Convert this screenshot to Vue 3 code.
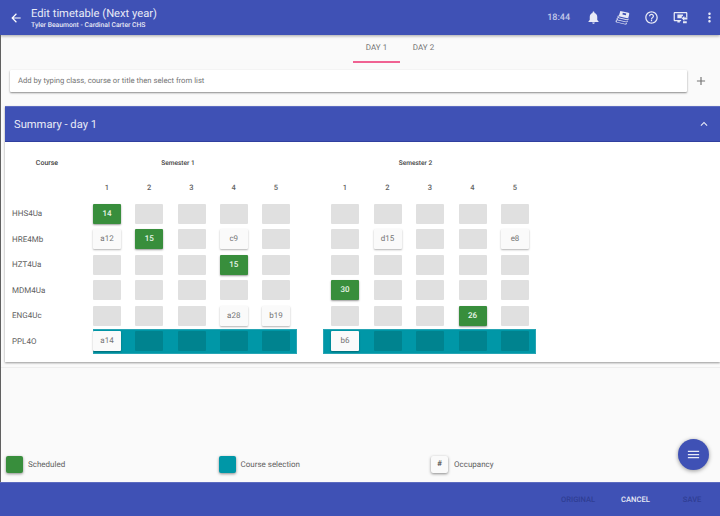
<template>
  <div class="app">
    <header class="topbar">
      <svg class="back" viewBox="0 0 24 24" width="14" height="14"><path d="M20 11H7.830l5.590-5.590L12 4l-8 8 8 8 1.410-1.410L7.830 13H20v-2z" /></svg>
      <div class="titles">
        <div class="title">Edit timetable (Next year)</div>
        <div class="subtitle">Tyler Beaumont - Cardinal Carter CHS</div>
      </div>
      <div class="time">18:44</div>
      <svg class="tool" viewBox="0 0 24 24" width="15" height="15"><path d="M12 22c1.100 0 2-.9 2-2h-4c0 1.100.89 2 2 2zm6-6v-5c0-3.070-1.640-5.640-4.500-6.320V4c0-.83-.67-1.500-1.500-1.500s-1.500.67-1.500 1.500v.68C7.630 5.360 6 7.920 6 11v5l-2 2v1h16v-1l-2-2z" /></svg>
      <svg class="tool" viewBox="0 0 24 24" width="15" height="15">
        <path d="M8.500 1.500l13 3c1 .2 1.500 1 1.300 2l-1.300 5.300c-.2 1-1 1.500-2 1.300l-13.500-3.100z" />
        <path class="cut" d="M12.500 4.500l5.500 1.200-.6 2.800-5.500-1.200z" />
        <path d="M5 8.500c-1.200 1.500-1.200 3.200-.5 4.200l14.800 3.500c1 .2 1.800-.2 2.400-1l.6-1.900-2 1.400c-.6.3-1 .3-1.600.2L6.500 12c-.8-.3-.9-1.300-.7-2.800z" />
        <path d="M3.500 12c-1.200 1.500-1.200 3.200-.5 4.200l14.800 3.500c1 .2 1.800-.2 2.400-1l.6-1.900-2 1.400c-.6.3-1 .3-1.600.2L5 15.500c-.8-.3-.9-1.300-.7-2.800z" />
        <path d="M2 15.500c-1.200 1.500-1.200 3.200-.5 4.200l14.800 3.500c1 .2 1.800-.2 2.400-1l.6-1.900-2 1.400c-.6.3-1 .3-1.600.2L3.500 19c-.8-.3-.9-1.300-.7-2.800z" />
      </svg>
      <svg class="tool" viewBox="0 0 24 24" width="15" height="15"><path d="M11 18h2v-2h-2v2zm1-16C6.480 2 2 6.480 2 12s4.480 10 10 10 10-4.480 10-10S17.520 2 12 2zm0 18c-4.410 0-8-3.590-8-8s3.590-8 8-8 8 3.590 8 8-3.590 8-8 8zm0-14c-2.210 0-4 1.790-4 4h2c0-1.100.9-2 2-2s2 .9 2 2c0 2-3 1.750-3 5h2c0-2.250 3-2.500 3-5 0-2.210-1.790-4-4-4z" /></svg>
      <svg class="tool" viewBox="0 0 24 24" width="15" height="15"><path d="M3 3h18c1.100 0 2 .9 2 2v7h-2V5H3v11h10v2h-2v2H7v-2H3c-1.100 0-2-.9-2-2V5c0-1.100.9-2 2-2z" /><path d="M7 7h9v2l-2 1.500V13H7z" /><path d="M14 13l4-3.500V12h5v3h-5v2.500zM16 18h6v3h-6z" /></svg>
      <svg class="tool last" viewBox="0 0 24 24" width="15" height="15"><path d="M12 8c1.100 0 2-.9 2-2s-.9-2-2-2-2 .9-2 2 .9 2 2 2zm0 2c-1.100 0-2 .9-2 2s.9 2 2 2 2-.9 2-2-.9-2-2-2zm0 6c-1.100 0-2 .9-2 2s.9 2 2 2 2-.9 2-2-.9-2-2-2z" /></svg>
    </header>

    <nav class="tabs">
      <div v-for="tab in tabs" :key="tab" class="tab" :class="{ active: tab === 'DAY 1' }">{{ tab }}</div>
    </nav>

    <div class="search-row">
      <div class="search">Add by typing class, course or title then select from list</div>
      <svg class="plus" viewBox="0 0 24 24" width="14" height="14"><path d="M19 13h-6v6h-2v-6H5v-2h6V5h2v6h6v2z" /></svg>
    </div>

    <section class="panel">
      <div class="panel-head">
        <span>Summary - day 1</span>
        <svg viewBox="0 0 24 24" width="14" height="14"><path d="M7.410 15.410L12 10.830l4.590 4.580L18 14l-6-6-6 6z" /></svg>
      </div>
      <div class="panel-body">
        <div class="row head-row">
          <div class="course course-head">Course</div>
          <div class="sem sem-one sem-title">Semester 1</div>
          <div class="sem sem-two sem-title">Semester 2</div>
        </div>
        <div class="row num-row">
          <div class="course"></div>
          <div v-for="(sem, i) in ['sem-one', 'sem-two']" :key="i" class="sem" :class="sem">
            <div v-for="n in 5" :key="n" class="num">{{ n }}</div>
          </div>
        </div>
        <div v-for="row in rows" :key="row.name" class="row">
          <div class="course">{{ row.name }}</div>
          <div
            v-for="(sem, i) in [row.s1, row.s2]"
            :key="i"
            class="sem"
            :class="[i === 0 ? 'sem-one' : 'sem-two', { selected: row.selected }]"
          >
            <div v-for="(cell, c) in sem" :key="c" class="cell" :class="cellClass(cell)">{{ cell }}</div>
          </div>
        </div>
      </div>
    </section>

    <div class="divider"></div>

    <div class="legend">
      <div class="legend-item"><span class="swatch green"></span>Scheduled</div>
      <div class="legend-item"><span class="swatch teal"></span>Course selection</div>
      <div class="legend-item"><span class="swatch plain">#</span>Occupancy</div>
    </div>

    <footer class="footer">
      <span class="action off">ORIGINAL</span>
      <span class="action">CANCEL</span>
      <span class="action off">SAVE</span>
    </footer>

    <button class="fab">
      <svg viewBox="0 0 24 24" width="15" height="15"><path d="M3 18h18v-2H3v2zm0-5h18v-2H3v2zm0-7v2h18V6H3z" /></svg>
    </button>
  </div>
</template>

<script setup>
const tabs = ['DAY 1', 'DAY 2']

const rows = [
  { name: 'HHS4Ua', s1: [14, '', '', '', ''], s2: ['', '', '', '', ''] },
  { name: 'HRE4Mb', s1: ['a12', 15, '', 'c9', ''], s2: ['', 'd15', '', '', 'e8'] },
  { name: 'HZT4Ua', s1: ['', '', '', 15, ''], s2: ['', '', '', '', ''] },
  { name: 'MDM4Ua', s1: ['', '', '', '', ''], s2: [30, '', '', '', ''] },
  { name: 'ENG4Uc', s1: ['', '', '', 'a28', 'b19'], s2: ['', '', '', 26, ''] },
  { name: 'PPL4O', s1: ['a14', '', '', '', ''], s2: ['b6', '', '', '', ''], selected: true },
]

const cellClass = (cell) => {
  if (cell === '') return 'empty'
  return typeof cell === 'number' ? 'count' : 'room'
}
</script>

<style>
html,
body {
  margin: 0;
  background: #fafafa;
}
</style>

<style scoped>
.app {
  position: relative;
  display: flex;
  flex-direction: column;
  width: 720px;
  height: 516px;
  overflow: hidden;
  background: #fafafa;
  font-family: Roboto, "Liberation Sans", sans-serif;
  text-rendering: geometricPrecision;
  color: #616161;
}

.app::before {
  content: "";
  position: absolute;
  left: 0;
  top: 35px;
  bottom: 34px;
  width: 1px;
  background: #616161;
  z-index: 3;
}

.topbar {
  position: relative;
  z-index: 2;
  display: flex;
  align-items: center;
  flex: none;
  height: 35px;
  padding-left: 9px;
  background: #3f51b5;
  color: #fff;
  box-shadow: 0 1px 3px rgba(0, 0, 0, 0.35);
}

.back {
  fill: #fff;
  margin-right: 8px;
}

.titles {
  flex: 1;
}

.title {
  font-size: 11.2px;
  line-height: 14px;
  color: #e8eaf6;
}

.subtitle {
  font-size: 6.8px;
  line-height: 8px;
  font-weight: 500;
  color: #e8eaf6;
}

.time {
  margin-right: 16px;
  font-size: 9px;
  font-weight: 500;
  color: #c5cae9;
}

.tool {
  fill: #e8eaf6;
  margin-right: 14px;
}

.tool.last {
  margin-right: 3px;
}

.cut {
  fill: #3f51b5;
}

.tabs {
  display: flex;
  justify-content: center;
  flex: none;
  height: 27px;
  padding-left: 80px;
}

.tab {
  width: 47px;
  height: 26px;
  line-height: 25px;
  text-align: center;
  font-size: 8px;
  color: #757575;
}

.tab.active {
  border-bottom: 2px solid #f06292;
}

.search-row {
  display: flex;
  align-items: center;
  flex: none;
  margin: 8px 0 14px 10px;
}

.search {
  width: 669px;
  height: 22px;
  padding-left: 8px;
  line-height: 22px;
  font-size: 7.7px;
  color: #757575;
  background: #fff;
  border-radius: 1px;
  box-shadow: 0 1px 2px rgba(0, 0, 0, 0.45);
}

.plus {
  margin-left: 7px;
  fill: #757575;
}

.panel {
  flex: none;
  margin-left: 5px;
  background: #fff;
  box-shadow: 0 1px 2px rgba(0, 0, 0, 0.4);
}

.panel-head {
  display: flex;
  align-items: center;
  justify-content: space-between;
  height: 34px;
  padding: 0 9px;
  border-top: 1px solid #5c6bc0;
  background: #3f51b5;
  color: #e8eaf6;
  font-size: 11.2px;
}

.panel-head svg {
  fill: #e8eaf6;
}

.panel-body {
  height: 221px;
  border-top: 1px solid #303f9f;
  box-sizing: border-box;
  padding-top: 10px;
}

.row {
  display: flex;
  align-items: center;
  height: 25.5px;
}

.head-row {
  height: 21px;
}

.num-row {
  box-sizing: border-box;
  height: 28px;
  padding-top: 1px;
}

.course {
  flex: none;
  width: 81px;
  padding-left: 7px;
  font-size: 8px;
  color: #616161;
}

.course-head {
  width: 70px;
  padding: 0 11px 0 7px;
  text-align: center;
  font-size: 7px;
  font-weight: 500;
  color: #424242;
}

.sem {
  display: flex;
  align-items: center;
  box-sizing: border-box;
  height: 25.5px;
}

.sem-one {
  width: 204px;
  padding-right: 7px;
  gap: 14.25px;
}

.sem-two {
  width: 213px;
  margin-left: 26px;
  padding: 0 7px 0 8px;
  gap: 14.5px;
}

.sem-title {
  justify-content: center;
  padding: 0 28px 0 0;
  font-size: 6.6px;
  font-weight: 500;
  color: #424242;
}

.sem-one.sem-title {
  padding-right: 34px;
}

.num {
  flex: none;
  width: 28px;
  text-align: center;
  font-size: 7.5px;
  font-weight: 500;
  color: #616161;
}

.selected {
  background: #0097a7;
  box-shadow: inset 0 0 0 1px #26a5b4;
}

.cell {
  flex: none;
  width: 28px;
  height: 20px;
  line-height: 19px;
  text-align: center;
  font-size: 8px;
  border-radius: 1px;
}

.empty {
  background: #e0e0e0;
}

.selected .empty {
  background: #00838f;
}

.count {
  background: #388e3c;
  color: #e8f5e9;
  font-weight: 500;
  box-shadow: 0 1px 2px rgba(0, 0, 0, 0.4);
}

.room {
  background: #fafafa;
  color: #757575;
  box-shadow: 0 1px 2px rgba(0, 0, 0, 0.3);
}

.divider {
  flex: none;
  height: 1px;
  margin-top: 5px;
  background: #eeeeee;
}

.legend {
  display: flex;
  align-items: center;
  flex: none;
  margin-top: 87px;
  padding-left: 6px;
  height: 18px;
}

.legend-item {
  display: flex;
  align-items: center;
  width: 212.5px;
  font-size: 8px;
  color: #616161;
}

.swatch {
  flex: none;
  width: 17px;
  height: 17px;
  margin-right: 5px;
  border-radius: 2px;
  box-shadow: 0 1px 3px rgba(0, 0, 0, 0.45);
  text-align: center;
  line-height: 16px;
  font-size: 8px;
  color: #424242;
}

.green {
  background: #388e3c;
}

.teal {
  background: #0097a7;
}

.plain {
  margin-right: 6px;
  background: #fafafa;
}

.footer {
  display: flex;
  align-items: center;
  flex: none;
  margin-top: auto;
  height: 33px;
  padding-left: 561px;
  border-top: 1px solid #5c6bc0;
  background: #3f51b5;
}

.action {
  font-size: 7.6px;
  font-weight: 500;
  color: #e8eaf6;
  margin-right: 26px;
}

.action.off {
  color: #2f3e94;
}

.action:nth-child(2) {
  margin-right: 33px;
}

.fab {
  position: absolute;
  left: 678px;
  top: 439px;
  display: flex;
  align-items: center;
  justify-content: center;
  width: 31px;
  height: 31px;
  padding: 0;
  border: 0;
  border-radius: 50%;
  background: #3f51b5;
  box-shadow: 0 1px 4px rgba(0, 0, 0, 0.4);
}

.fab svg {
  fill: #e8eaf6;
}
</style>
